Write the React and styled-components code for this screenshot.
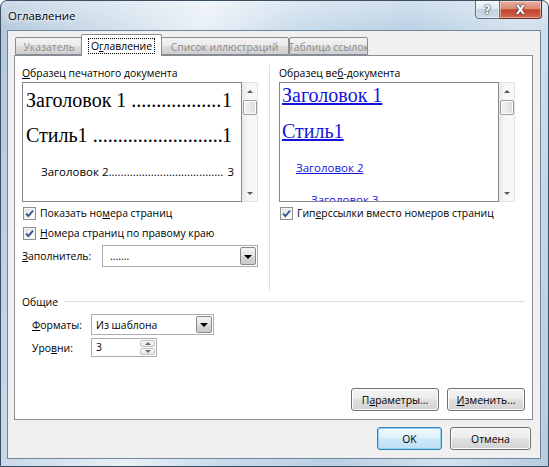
import React from "react";
import styled, { createGlobalStyle } from "styled-components";

const UI = `"Open Sans", "Liberation Sans", sans-serif`;
const SERIF = `"Liberation Serif", "Times New Roman", serif`;

const GlobalStyle = createGlobalStyle`
  html, body {
    margin: 0;
    padding: 0;
    background: #ffffff;
  }
  body {
    font-family: ${UI};
    font-size: 10.4px;
    color: #000;
  }
  * {
    box-sizing: border-box;
  }
`;

const Window = styled.div`
  width: 549px;
  height: 467px;
  display: flex;
  flex-direction: column;
  border: 1px solid #3b4f63;
  border-radius: 7px 7px 0 0;
  overflow: hidden;
  background: linear-gradient(
      180deg,
      rgba(255, 255, 255, 0.35) 0px,
      rgba(255, 255, 255, 0) 30px
    ),
    linear-gradient(
      100deg,
      #b2c7db 0%,
      #d0dfec 18%,
      #e8f0f6 33%,
      #c9dbeb 48%,
      #bbd0e4 66%,
      #d3e2ee 84%,
      #b7cce0 100%
    );
`;

const TitleBar = styled.div`
  height: 29px;
  display: flex;
  align-items: flex-start;
  padding-left: 7px;
`;

const Title = styled.div`
  align-self: center;
  font-size: 11.5px;
  line-height: 16px;
  color: #000;
  text-shadow: 0 0 6px #fff, 0 0 3px #fff;
`;

const CaptionButtons = styled.div`
  display: flex;
  margin-left: auto;
  margin-right: 6px;
  margin-top: -1px;
`;

const CaptionButton = styled.div`
  width: ${(p) => p.$w}px;
  height: 19px;
  display: flex;
  align-items: center;
  justify-content: center;
  font-family: "DejaVu Sans", sans-serif;
  font-weight: bold;
  font-size: 12px;
  color: #fff;
  text-shadow: 0 0 2px #333, 0 0 1px #000;
  border: 1px solid ${(p) => (p.$close ? "#6b2a25" : "#5d6e80")};
  border-radius: ${(p) => (p.$close ? "0 0 4px 0" : "0 0 0 4px")};
  border-left-width: ${(p) => (p.$close ? 0 : 1)}px;
  background: ${(p) =>
    p.$close
      ? "linear-gradient(180deg, #eab0a1 0%, #d98a76 45%, #c4432e 52%, #cf6a50 100%)"
      : "linear-gradient(180deg, rgba(255,255,255,0.75) 0%, rgba(225,233,241,0.6) 45%, rgba(176,194,212,0.6) 52%, rgba(206,219,231,0.7) 100%)"};
  box-shadow: inset 0 0 0 1px rgba(255, 255, 255, 0.45);
`;

const Client = styled.div`
  flex: 1;
  margin: 0 7px 7px 6px;
  border: 1px solid #71859b;
  background: #f0f0f0;
  display: flex;
  flex-direction: column;
`;

const TabRow = styled.div`
  height: 25px;
  display: flex;
  align-items: flex-end;
  padding-left: 7px;
  margin-bottom: -1px;
  position: relative;
  z-index: 1;
`;

const Tab = styled.div`
  width: ${(p) => p.$w}px;
  height: ${(p) => (p.$active ? 22 : 18)}px;
  margin: ${(p) => (p.$active ? "0 -2px" : "0 0 1px 0")};
  display: flex;
  align-items: center;
  justify-content: center;
  white-space: nowrap;
  padding-top: ${(p) => (p.$active ? 0 : 1)}px;
  border: 1px solid #898c95;
  border-bottom: ${(p) => (p.$active ? "none" : "1px solid #898c95")};
  border-radius: 2px 2px 0 0;
  background: ${(p) =>
    p.$active
      ? "#ffffff"
      : "linear-gradient(180deg, #f2f2f2 0%, #ebebeb 50%, #dddddd 51%, #cfcfcf 100%)"};
  color: ${(p) => (p.$active ? "#000" : "#8d8d8d")};
  position: relative;
  z-index: ${(p) => (p.$active ? 2 : 1)};
`;

const FocusText = styled.span`
  outline: 1px dotted #000;
  outline-offset: 0px;
  padding: 0 2px;
  line-height: 14px;
`;

const Panel = styled.div`
  height: 365px;
  margin: 0 7px 0 6px;
  border: 1px solid #898c95;
  background: #fff;
  padding: 10px 7px 8px 7px;
  display: flex;
  flex-direction: column;
`;

const Columns = styled.div`
  height: 224px;
  display: flex;
`;

const Column = styled.div`
  width: ${(p) => (p.$w ? `${p.$w}px` : "auto")};
  flex: ${(p) => (p.$w ? "none" : 1)};
  display: flex;
  flex-direction: column;
`;

const VDivider = styled.div`
  width: 1px;
  margin: -1px 9px 0 11px;
  background: #d5dfe5;
`;

const Label = styled.div`
  height: 15px;
  line-height: 15px;
  margin-bottom: 1px;
  white-space: nowrap;
`;

const U = styled.span`
  text-decoration: underline;
`;

const Preview = styled.div`
  height: 120px;
  display: flex;
`;

const PreviewPage = styled.div`
  width: 220px;
  border: 1px solid #828790;
  background: #fff;
  overflow: hidden;
  padding: ${(p) => (p.$web ? "0 0 0 2px" : "5px 0 0 3px")};
`;

const Scrollbar = styled.div`
  width: 16px;
  border: 1px solid #e3e3e3;
  border-left: none;
  background: linear-gradient(90deg, #e8e8e8 0%, #f7f7f7 40%, #f7f7f7 100%);
  display: flex;
  flex-direction: column;
  align-items: center;
`;

const ScrollArrow = styled.div`
  width: 0;
  height: 0;
  border-left: 3px solid transparent;
  border-right: 3px solid transparent;
  ${(p) =>
    p.$down
      ? "border-top: 3px solid #5a5a5a; margin-top: auto; margin-bottom: 6px;"
      : "border-bottom: 3px solid #5a5a5a; margin-top: 7px;"}
`;

const Thumb = styled.div`
  width: 14px;
  height: 15px;
  margin-top: 7px;
  border: 1px solid #9b9b9b;
  border-radius: 2px;
  background: linear-gradient(90deg, #f3f3f3 0%, #e8e8e8 50%, #dadada 100%);
  box-shadow: inset 0 0 0 1px #fff;
`;

const TocLine = styled.div`
  display: flex;
  white-space: nowrap;
  font-family: ${(p) => (p.$small ? UI : SERIF)};
  font-size: ${(p) => (p.$small ? 11.5 : 20)}px;
  line-height: ${(p) => (p.$small ? 16 : 24)}px;
  margin-top: ${(p) => p.$top}px;
  padding-left: ${(p) => p.$indent || 0}px;
  padding-right: ${(p) => (p.$small ? 7 : 9)}px;
`;

const Leader = styled.span`
  flex: 1;
  overflow: hidden;
  white-space: nowrap;
  padding-left: ${(p) => (p.$gap ? "0.25em" : 0)};
`;

const WebLink = styled.div`
  white-space: nowrap;
  color: #1414dc;
  text-decoration: underline;
  font-family: ${(p) => (p.$small ? UI : SERIF)};
  font-size: ${(p) => (p.$small ? 11.5 : 20)}px;
  line-height: ${(p) => (p.$small ? 16 : 24)}px;
  margin-top: ${(p) => p.$top}px;
  padding-left: ${(p) => p.$indent || 0}px;
`;

const CheckRow = styled.div`
  height: 20px;
  margin-top: ${(p) => p.$top || 0}px;
  display: flex;
  align-items: center;
  white-space: nowrap;
`;

const CheckBox = styled.span`
  width: 13px;
  height: 13px;
  margin: 0 4px 0 1px;
  border: 1px solid #8e8f8f;
  background: linear-gradient(135deg, #dcdcdc 0%, #f5f5f5 60%, #ffffff 100%);
  box-shadow: inset 0 0 0 1px #f4f4f4;
  display: flex;
  align-items: center;
  justify-content: center;
`;

const FieldRow = styled.div`
  display: flex;
  align-items: center;
  margin-top: ${(p) => p.$top}px;
  padding-left: ${(p) => p.$indent || 0}px;
`;

const FieldLabel = styled.div`
  width: ${(p) => p.$w}px;
  white-space: nowrap;
`;

const Combo = styled.div`
  width: ${(p) => (p.$w ? `${p.$w}px` : "auto")};
  flex: ${(p) => (p.$w ? "none" : 1)};
  height: ${(p) => p.$h}px;
  border: 1px solid #abadb3;
  background: #fff;
  display: flex;
  align-items: center;
  padding: 1px;
`;

const ComboText = styled.div`
  flex: 1;
  padding-left: ${(p) => p.$pad}px;
  white-space: nowrap;
`;

const DropButton = styled.div`
  width: 16px;
  height: 100%;
  border: 1px solid #8a8a8a;
  border-radius: 2px;
  background: linear-gradient(180deg, #f2f2f2 0%, #e6e6e6 50%, #d6d6d6 51%, #cbcbcb 100%);
  display: flex;
  align-items: center;
  justify-content: center;
  &::after {
    content: "";
    border-left: 4px solid transparent;
    border-right: 4px solid transparent;
    border-top: 4px solid #000;
    margin-top: 1px;
  }
`;

const Spin = styled.div`
  width: 66px;
  height: 19px;
  border: 1px solid #abadb3;
  background: #fff;
  display: flex;
  padding: 1px;
`;

const SpinButtons = styled.div`
  width: 15px;
  display: flex;
  flex-direction: column;
  gap: 1px;
`;

const SpinButton = styled.div`
  flex: 1;
  border: 1px solid #c3c3c3;
  border-radius: 2px;
  background: linear-gradient(180deg, #f7f7f7 0%, #e6e6e6 100%);
  display: flex;
  align-items: center;
  justify-content: center;
  &::after {
    content: "";
    border-left: 3px solid transparent;
    border-right: 3px solid transparent;
    ${(p) =>
      p.$down
        ? "border-top: 3px solid #6a6a6a;"
        : "border-bottom: 3px solid #6a6a6a;"}
  }
`;

const GroupHeader = styled.div`
  height: 15px;
  margin-top: 4px;
  display: flex;
  align-items: center;
  &::after {
    content: "";
    flex: 1;
    height: 1px;
    margin-left: 6px;
    background: #d5dfe5;
  }
`;

const ButtonRow = styled.div`
  display: flex;
  justify-content: flex-end;
  gap: 8px;
  margin-top: auto;
`;

const Footer = styled(ButtonRow)`
  margin-top: 7px;
  padding-right: 9px;
`;

const Button = styled.div`
  width: ${(p) => p.$w}px;
  height: 23px;
  display: flex;
  align-items: center;
  justify-content: center;
  border: 1px solid ${(p) => (p.$primary ? "#3c7fb1" : "#707070")};
  border-radius: 3px;
  background: ${(p) =>
    p.$primary
      ? "linear-gradient(180deg, #f0f8fd 0%, #e2f1fb 45%, #cde8f9 52%, #bfe0f5 100%)"
      : "linear-gradient(180deg, #f4f4f4 0%, #ececec 45%, #dfdfdf 52%, #d3d3d3 100%)"};
  box-shadow: inset 0 0 0 1px ${(p) => (p.$primary ? "#8fd2f7" : "#fcfcfc")};
  white-space: nowrap;
`;

const Check = () => (
  <CheckBox>
    <svg width="9" height="9" viewBox="0 0 9 9">
      <path
        d="M1 4.6 L3.4 7 L8 1.6"
        fill="none"
        stroke="#3d518b"
        strokeWidth="1.9"
      />
    </svg>
  </CheckBox>
);

const ListScroll = () => (
  <Scrollbar>
    <ScrollArrow />
    <Thumb />
    <ScrollArrow $down />
  </Scrollbar>
);

const dots = ".".repeat(80);

export default function App() {
  return (
    <>
      <GlobalStyle />
      <Window>
        <TitleBar>
          <Title>Оглавление</Title>
          <CaptionButtons>
            <CaptionButton $w={25}>?</CaptionButton>
            <CaptionButton $w={42} $close>
              X
            </CaptionButton>
          </CaptionButtons>
        </TitleBar>
        <Client>
          <TabRow>
            <Tab $w={68}>Указатель</Tab>
            <Tab $w={81} $active>
              <FocusText>
                О<U>г</U>лавление
              </FocusText>
            </Tab>
            <Tab $w={129}>Список иллюстраций</Tab>
            <Tab $w={79}>Таблица ссылок</Tab>
          </TabRow>
          <Panel>
            <Columns>
              <Column $w={236}>
                <Label>
                  <U>О</U>бразец печатного документа
                </Label>
                <Preview>
                  <PreviewPage>
                    <TocLine $top={0}>
                      Заголовок 1<Leader $gap>{dots}</Leader>1
                    </TocLine>
                    <TocLine $top={11}>
                      Стиль1<Leader $gap>{dots}</Leader>1
                    </TocLine>
                    <TocLine $top={17} $indent={15} $small>
                      Заголовок 2<Leader>{dots}</Leader>&nbsp;3
                    </TocLine>
                  </PreviewPage>
                  <ListScroll />
                </Preview>
                <CheckRow $top={1}>
                  <Check />
                  Показать но<U>м</U>ера страниц
                </CheckRow>
                <CheckRow>
                  <Check />
                  <U>Н</U>омера страниц по правому краю
                </CheckRow>
                <FieldRow $top={2}>
                  <FieldLabel $w={80}>
                    <U>З</U>аполнитель:
                  </FieldLabel>
                  <Combo $h={22}>
                    <ComboText $pad={6}>.......</ComboText>
                    <DropButton />
                  </Combo>
                </FieldRow>
              </Column>
              <VDivider />
              <Column>
                <Label>
                  Образец ве<U>б</U>-документа
                </Label>
                <Preview>
                  <PreviewPage $web>
                    <WebLink $top={0}>Заголовок 1</WebLink>
                    <WebLink $top={12}>Стиль1</WebLink>
                    <WebLink $top={17} $indent={14} $small>
                      Заголовок 2
                    </WebLink>
                    <WebLink $top={16} $indent={29} $small>
                      Заголовок 3
                    </WebLink>
                  </PreviewPage>
                  <ListScroll />
                </Preview>
                <CheckRow $top={1}>
                  <Check />
                  Гип<U>е</U>рссылки вместо номеров страниц
                </CheckRow>
              </Column>
            </Columns>
            <GroupHeader>Общие</GroupHeader>
            <FieldRow $top={5} $indent={10}>
              <FieldLabel $w={59}>
                <U>Ф</U>орматы:
              </FieldLabel>
              <Combo $w={123} $h={21}>
                <ComboText $pad={3}>Из шаблона</ComboText>
                <DropButton />
              </Combo>
            </FieldRow>
            <FieldRow $top={3} $indent={10}>
              <FieldLabel $w={59}>
                Уро<U>в</U>ни:
              </FieldLabel>
              <Spin>
                <ComboText $pad={3}>3</ComboText>
                <SpinButtons>
                  <SpinButton />
                  <SpinButton $down />
                </SpinButtons>
              </Spin>
            </FieldRow>
            <ButtonRow>
              <Button $w={88}>
                П<U>а</U>раметры...
              </Button>
              <Button $w={78}>
                <U>И</U>зменить...
              </Button>
            </ButtonRow>
          </Panel>
          <Footer>
            <Button $w={65} $primary>
              OK
            </Button>
            <Button $w={81}>Отмена</Button>
          </Footer>
        </Client>
      </Window>
    </>
  );
}
